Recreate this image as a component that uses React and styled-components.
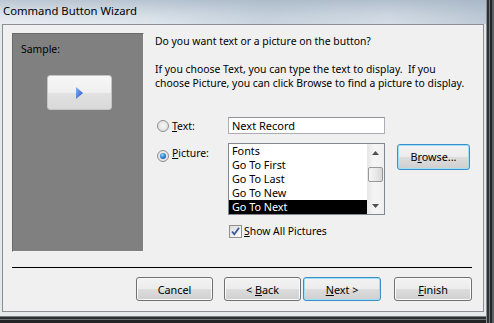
import React from 'react';
import styled, { createGlobalStyle, css } from 'styled-components';

const GlobalStyle = createGlobalStyle`
  html, body {
    margin: 0;
    padding: 0;
    background: #ffffff;
  }
  body {
    font-family: "Noto Sans", "Open Sans", sans-serif;
    font-size: 10.4px;
    color: #000000;
  }
`;

const Window = styled.div`
  width: 494px;
  height: 323px;
  display: flex;
  overflow: hidden;
`;

const Main = styled.div`
  flex: 1;
  display: flex;
  flex-direction: column;
  background: #e3e8ed;
`;

const RightEdge = styled.div`
  width: 8px;
  background: linear-gradient(90deg, #8a8d90 0 1px, #2e2f31 1px 3px, #75787b 3px 4px, #242526 4px 6px, #5d6063 6px 8px);
`;

const TitleBar = styled.div`
  height: 24px;
  box-sizing: border-box;
  padding: 3px 0 0 3px;
  font-size: 11.3px;
  line-height: 15px;
  background:
    linear-gradient(180deg, rgba(150, 168, 186, 0.55) 0%, rgba(150, 168, 186, 0.15) 60%, rgba(255, 255, 255, 0) 100%),
    linear-gradient(90deg, #e9edf2 0%, #dfe6ed 30%, #c9d4df 55%, #d5dde6 80%, #bfcbd7 100%);
`;

const ClientRow = styled.div`
  display: flex;
  padding: 0 2px;
`;

const BottomEdge = styled.div`
  flex: 1;
  background: linear-gradient(180deg, #e6e9ec 0 4px, #7c7f82 4px 5px, #2c2d2f 5px 7px, #6f7275 7px 8px, #232425 8px 11px);
`;

const Client = styled.div`
  flex: 1;
  height: 288px;
  box-sizing: border-box;
  border: 1px solid #8b8f94;
  background: #f0f0f0;
  padding: 8px 11px 0 9px;
  display: flex;
  flex-direction: column;
`;

const Top = styled.div`
  display: flex;
  gap: 11px;
  height: 219px;
`;

const SamplePanel = styled.div`
  width: 132px;
  box-sizing: border-box;
  background: #808080;
  border-top: 1px solid #6a6a6a;
  border-left: 1px solid #6a6a6a;
  border-right: 1px solid #f4f4f4;
  border-bottom: 1px solid #f4f4f4;
  padding: 8px 0 0 8px;
  display: flex;
  flex-direction: column;
  line-height: 14px;
`;

const SampleButton = styled.div`
  width: 65px;
  height: 35px;
  box-sizing: border-box;
  margin: 19px 0 0 26px;
  border: 1px solid #c4c4c4;
  border-radius: 3px;
  background: linear-gradient(180deg, #f7f7f7 0%, #efefef 50%, #e2e2e2 50%, #d9d9d9 100%);
  display: flex;
  align-items: center;
  justify-content: center;
`;

const Options = styled.div`
  flex: 1;
  display: flex;
  flex-direction: column;
  padding-top: 1px;
  line-height: 14px;
  white-space: nowrap;
`;

const Hint = styled.div`
  margin-top: 14px;
`;

const ChoiceGrid = styled.div`
  margin-top: 27px;
  display: grid;
  grid-template-columns: 17px 56px 157px 85px;
  grid-template-rows: 17px 72px auto;
  row-gap: 9px;
`;

const Cell = styled.div`
  display: flex;
  align-items: ${(p) => (p.$top ? 'flex-start' : 'center')};
  padding-top: ${(p) => p.$pt || 0}px;
`;

const Radio = styled.span`
  width: 12px;
  height: 12px;
  margin-left: 2px;
  box-sizing: border-box;
  border-radius: 50%;
  border: 1px solid #8c8e90;
  background: radial-gradient(circle at 50% 45%, #f6f6f6 0%, #e2e2e2 70%, #cfcfcf 100%);
  display: flex;
  align-items: center;
  justify-content: center;
  ${(p) =>
    p.$checked &&
    css`
      &::after {
        content: '';
        width: 6px;
        height: 6px;
        border-radius: 50%;
        background: radial-gradient(circle at 40% 35%, #9fdcff 0%, #2f87d6 45%, #0d3c74 100%);
      }
    `}
`;

const Label = styled.span`
  white-space: nowrap;
`;

const U = styled.span`
  text-decoration: underline;
`;

const TextInput = styled.div`
  width: 157px;
  height: 17px;
  box-sizing: border-box;
  border: 1px solid #abadb3;
  border-top-color: #8e9197;
  background: #ffffff;
  padding: 0 3px;
  line-height: 15px;
  font-size: 11px;
`;

const ListBox = styled.div`
  width: 157px;
  height: 72px;
  box-sizing: border-box;
  border: 1px solid #828790;
  background: #ffffff;
  display: flex;
`;

const Items = styled.div`
  flex: 1;
  display: flex;
  flex-direction: column;
  justify-content: flex-end;
  overflow: hidden;
`;

const Item = styled.div`
  height: 14px;
  line-height: 14px;
  padding-left: 3px;
  font-size: 10.8px;
  white-space: nowrap;
  background: ${(p) => (p.$selected ? '#000000' : 'transparent')};
  color: ${(p) => (p.$selected ? '#ffffff' : '#000000')};
`;

const ScrollBar = styled.div`
  width: 17px;
  display: flex;
  flex-direction: column;
  align-items: center;
  background: linear-gradient(90deg, #e6e6e6 0%, #f5f5f5 40%, #f0f0f0 100%);
`;

const ScrollArrow = styled.div`
  height: 17px;
  width: 17px;
  display: flex;
  align-items: center;
  justify-content: center;
`;

const Thumb = styled.div`
  width: 15px;
  height: 15px;
  margin-top: 6px;
  box-sizing: border-box;
  border: 1px solid #979797;
  border-radius: 2px;
  background: linear-gradient(90deg, #f5f5f5 0%, #e9e9e9 50%, #d8d8d8 100%);
`;

const Spacer = styled.div`
  flex: 1;
`;

const Button = styled.div`
  width: ${(p) => p.$w || 77}px;
  height: ${(p) => p.$h || 24}px;
  margin: ${(p) => p.$m || '0'};
  box-sizing: border-box;
  border-radius: 3px;
  border: 1px solid ${(p) => (p.$focus ? '#3c8ecb' : '#707070')};
  box-shadow: inset 0 0 0 1px ${(p) => (p.$focus ? '#9ee0f8' : '#fbfbfb')};
  background: linear-gradient(180deg, #f3f3f3 0%, #ececec 48%, #dddddd 52%, #cfcfcf 100%);
  display: flex;
  align-items: center;
  justify-content: center;
  white-space: nowrap;
  font-size: 10.8px;
`;

const CheckRow = styled.div`
  grid-column: 3 / 5;
  display: flex;
  align-items: center;
  gap: 2px;
  margin-left: 1px;
`;

const CheckBox = styled.span`
  width: 13px;
  height: 13px;
  box-sizing: border-box;
  border: 1px solid #8e8f8f;
  background: linear-gradient(135deg, #dcdcdc 0%, #f6f6f6 80%, #ffffff 100%);
  display: flex;
  align-items: center;
  justify-content: center;
`;

const Separator = styled.div`
  height: 1px;
  margin-top: 15px;
  background: #000000;
`;

const ButtonRow = styled.div`
  display: flex;
  justify-content: flex-end;
  margin-top: 9px;
`;

const Title = styled.span`
  color: #000000;
`;

const PlayArrow = () => (
  <svg width="7" height="12" viewBox="0 0 7 12">
    <defs>
      <linearGradient id="pa" x1="0" y1="0" x2="1" y2="1">
        <stop offset="0" stopColor="#8db4f5" />
        <stop offset="1" stopColor="#1f4fc4" />
      </linearGradient>
    </defs>
    <polygon points="0,0 7,6 0,12" fill="url(#pa)" />
  </svg>
);

const Tri = ({ up }) => (
  <svg width="7" height="4" viewBox="0 0 7 4">
    <polygon points={up ? '0,4 3.5,0 7,4' : '0,0 3.5,4 7,0'} fill="#505050" />
  </svg>
);

const Check = () => (
  <svg width="11" height="11" viewBox="0 0 11 11">
    <path d="M2 5.5 L4.3 8.3 L9 1.8" fill="none" stroke="#3d5aa0" strokeWidth="1.8" />
  </svg>
);

const pictures = ['Fonts', 'Go To First', 'Go To Last', 'Go To New', 'Go To Next'];

const App = () => {
  return (
    <>
      <GlobalStyle />
      <Window>
        <Main>
          <TitleBar>
            <Title>Command Button Wizard</Title>
          </TitleBar>
          <ClientRow>
            <Client>
              <Top>
                <SamplePanel>
                  <span>Sample:</span>
                  <SampleButton>
                    <PlayArrow />
                  </SampleButton>
                </SamplePanel>
                <Options>
                  <div>Do you want text or a picture on the button?</div>
                  <Hint>
                    If you choose Text, you can type the text to display.&nbsp; If you
                    <br />
                    choose Picture, you can click Browse to find a picture to display.
                  </Hint>
                  <ChoiceGrid>
                    <Cell>
                      <Radio />
                    </Cell>
                    <Cell>
                      <Label>
                        <U>T</U>ext:
                      </Label>
                    </Cell>
                    <Cell>
                      <TextInput>Next Record</TextInput>
                    </Cell>
                    <Cell />
                    <Cell $top $pt={7}>
                      <Radio $checked />
                    </Cell>
                    <Cell $top $pt={3}>
                      <Label>
                        <U>P</U>icture:
                      </Label>
                    </Cell>
                    <Cell $top>
                      <ListBox>
                        <Items>
                          {pictures.map((name, i) => (
                            <Item key={name} $selected={i === pictures.length - 1}>
                              {name}
                            </Item>
                          ))}
                        </Items>
                        <ScrollBar>
                          <ScrollArrow>
                            <Tri up />
                          </ScrollArrow>
                          <Thumb />
                          <Spacer />
                          <ScrollArrow>
                            <Tri />
                          </ScrollArrow>
                        </ScrollBar>
                      </ListBox>
                    </Cell>
                    <Cell $top $pt={1}>
                      <Button $w={73} $h={26} $m="0 0 0 12px" $focus>
                        <span>
                          B<U>r</U>owse...
                        </span>
                      </Button>
                    </Cell>
                    <CheckRow>
                      <CheckBox>
                        <Check />
                      </CheckBox>
                      <Label>
                        <U>S</U>how All Pictures
                      </Label>
                    </CheckRow>
                  </ChoiceGrid>
                </Options>
              </Top>
              <Separator />
              <ButtonRow>
                <Button $m="0 11px 0 0">Cancel</Button>
                <Button $m="0 2px 0 0">
                  <span>
                    &lt; <U>B</U>ack
                  </span>
                </Button>
                <Button $w={78} $m="0 13px 0 0" $focus>
                  <span>
                    <U>N</U>ext &gt;
                  </span>
                </Button>
                <Button $w={78}>
                  <span>
                    <U>F</U>inish
                  </span>
                </Button>
              </ButtonRow>
            </Client>
          </ClientRow>
          <BottomEdge />
        </Main>
        <RightEdge />
      </Window>
    </>
  );
};

export default App;
